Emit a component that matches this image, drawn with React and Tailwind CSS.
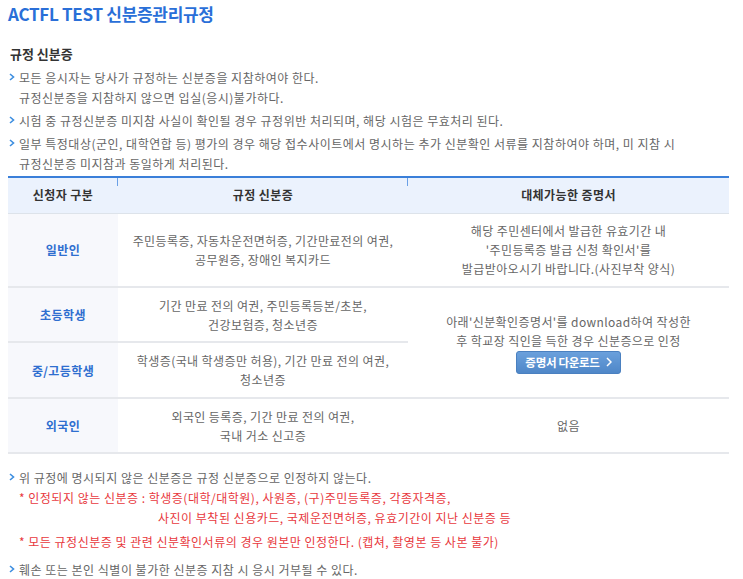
import React from "react";

const font = { fontFamily: '"Noto Sans CJK KR", "Noto Sans", sans-serif' };

function Arrow() {
  return (
    <svg width="6" height="8" viewBox="0 0 6 8" className="mt-[5px] shrink-0">
      <path d="M1 1 L4.5 4 L1 7" fill="none" stroke="#3d8ee0" strokeWidth="1.6" />
    </svg>
  );
}

function Bullet({ children }) {
  return (
    <div className="flex gap-[4px]">
      <Arrow />
      <div>{children}</div>
    </div>
  );
}

const rows = [
  { who: "일반인", docs: ["주민등록증, 자동차운전면허증, 기간만료전의 여권,", "공무원증, 장애인 복지카드"] },
  { who: "초등학생", docs: ["기간 만료 전의 여권, 주민등록등본/초본,", "건강보험증, 청소년증"] },
  { who: "중/고등학생", docs: ["학생증(국내 학생증만 허용), 기간 만료 전의 여권,", "청소년증"] },
  { who: "외국인", docs: ["외국인 등록증, 기간 만료 전의 여권,", "국내 거소 신고증"] },
];

export default function App() {
  return (
    <div className="w-[743px] h-[579px] bg-white overflow-hidden text-[12px] text-[#666] tracking-[0.5px]" style={font}>
      <h1 className="pl-[8px] pt-[1px] text-[17px] font-bold text-[#2a6fd8] leading-[26px] tracking-[-0.3px]">
        ACTFL TEST 신분증관리규정
      </h1>

      <h2 className="pl-[10px] mt-[18px] text-[13px] font-bold text-[#333] leading-[18px] tracking-normal">규정 신분증</h2>

      <div className="pl-[9px] mt-[5px] leading-[20px] flex flex-col gap-[3px]">
        <Bullet>
          모든 응시자는 당사가 규정하는 신분증을 지참하여야 한다.
          <br />
          규정신분증을 지참하지 않으면 입실(응시)불가하다.
        </Bullet>
        <Bullet>시험 중 규정신분증 미지참 사실이 확인될 경우 규정위반 처리되며, 해당 시험은 무효처리 된다.</Bullet>
        <Bullet>
          일부 특정대상(군인, 대학연합 등) 평가의 경우 해당 접수사이트에서 명시하는 추가 신분확인 서류를 지참하여야 하며, 미 지참 시
          <br />
          규정신분증 미지참과 동일하게 처리된다.
        </Bullet>
      </div>

      <table className="ml-[8px] mt-[2px] w-[721px] border-collapse border-t-2 border-[#3a7fd9] tracking-[0.4px]">
        <thead>
          <tr className="bg-[#ebf2fd] h-[36px] border-b border-[#dde3ea]">
            <th className="w-[110px] relative font-bold text-[#333] text-[12px]">
              신청자 구분
              <span className="absolute right-0 top-0 w-[1px] h-[8px] bg-[#6aa0e6]" />
            </th>
            <th className="w-[290px] relative font-bold text-[#333] text-[12px]">
              규정 신분증
              <span className="absolute right-0 top-0 w-[1px] h-[8px] bg-[#6aa0e6]" />
            </th>
            <th className="font-bold text-[#333] text-[12px]">대체가능한 증명서</th>
          </tr>
        </thead>
        <tbody className="leading-[19px]">
          <tr className="h-[74px] border-b-2 border-[#e6e8ec]">
            <td className="bg-[#f7f8fc] text-center font-bold text-[#2f6fd0]">{rows[0].who}</td>
            <td className="text-center">
              {rows[0].docs[0]}
              <br />
              {rows[0].docs[1]}
            </td>
            <td className="text-center">
              해당 주민센터에서 발급한 유효기간 내
              <br />
              '주민등록증 발급 신청 확인서'를
              <br />
              발급받아오시기 바랍니다.(사진부착 양식)
            </td>
          </tr>
          <tr className="h-[55px]">
            <td className="bg-[#f7f8fc] text-center font-bold text-[#2f6fd0] border-b-2 border-[#e6e8ec]">{rows[1].who}</td>
            <td className="text-center border-b-2 border-[#e6e8ec]">
              {rows[1].docs[0]}
              <br />
              {rows[1].docs[1]}
            </td>
            <td rowSpan={2} className="text-center border-b-2 border-[#e6e8ec] align-middle">
              <div>
                아래'신분확인증명서'를 download하여 작성한
                <br />
                후 학교장 직인을 득한 경우 신분증으로 인정
              </div>
              <button className="mt-[1px] h-[23px] px-[8px] rounded-[3px] bg-gradient-to-b from-[#6aa0dc] to-[#4f87c8] text-white font-bold text-[11.5px] tracking-[-0.3px] inline-flex items-center gap-[6px] border border-[#4a80c0]">
                증명서 다운로드
                <svg width="6" height="10" viewBox="0 0 6 10">
                  <path d="M1 1 L5 5 L1 9" fill="none" stroke="white" strokeWidth="1.5" />
                </svg>
              </button>
            </td>
          </tr>
          <tr className="h-[56px]">
            <td className="bg-[#f7f8fc] text-center font-bold text-[#2f6fd0] border-b-2 border-[#e6e8ec]">{rows[2].who}</td>
            <td className="text-center border-b-2 border-[#e6e8ec]">
              {rows[2].docs[0]}
              <br />
              {rows[2].docs[1]}
            </td>
          </tr>
          <tr className="h-[55px] border-b-2 border-[#e6e8ec]">
            <td className="bg-[#f7f8fc] text-center font-bold text-[#2f6fd0]">{rows[3].who}</td>
            <td className="text-center">
              {rows[3].docs[0]}
              <br />
              {rows[3].docs[1]}
            </td>
            <td className="text-center">없음</td>
          </tr>
        </tbody>
      </table>

      <div className="pl-[9px] mt-[14px] leading-[20px]">
        <Bullet>위 규정에 명시되지 않은 신분증은 규정 신분증으로 인정하지 않는다.</Bullet>
        <div className="pl-[10px] text-[#e8383d]">
          <div>* 인정되지 않는 신분증 : 학생증(대학/대학원), 사원증, (구)주민등록증, 각종자격증,</div>
          <div className="pl-[139px]">사진이 부착된 신용카드, 국제운전면허증, 유효기간이 지난 신분증 등</div>
          <div className="mt-[4px]">* 모든 규정신분증 및 관련 신분확인서류의 경우 원본만 인정한다. (캡쳐, 촬영본 등 사본 불가)</div>
        </div>
        <div className="mt-[8px]">
          <Bullet>훼손 또는 본인 식별이 불가한 신분증 지참 시 응시 거부될 수 있다.</Bullet>
        </div>
      </div>
    </div>
  );
}
